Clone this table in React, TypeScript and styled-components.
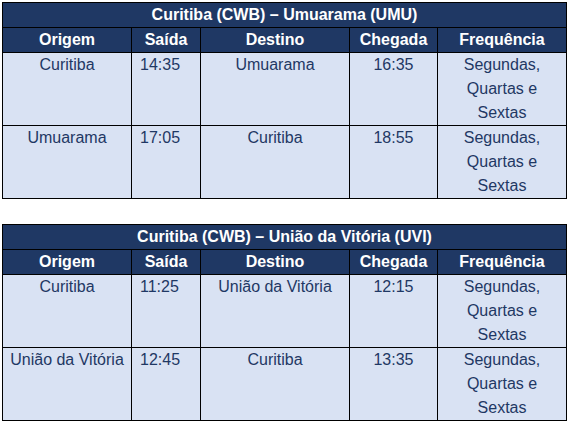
import React from 'react';
import styled, { createGlobalStyle } from 'styled-components';

const GlobalStyle = createGlobalStyle`
  body {
    margin: 0;
    padding: 2px;
    background: #ffffff;
    font-family: "Liberation Sans", Arial, sans-serif;
  }
`;

const Page = styled.div`
  display: flex;
  flex-direction: column;
  gap: 25px;
`;

const Table = styled.table`
  width: 564px;
  table-layout: fixed;
  border-collapse: collapse;
  border: 1px solid #000;
  font-size: 16px;
  line-height: 24px;
`;

const TitleCell = styled.th`
  background: #1f3864;
  color: #ffffff;
  font-weight: bold;
  text-align: center;
  padding: 0;
  border: 1px solid #000;
`;

const HeadCell = styled.th`
  background: #1f3864;
  color: #ffffff;
  font-weight: bold;
  text-align: center;
  padding: 0 5px;
  border: 1px solid #000;
`;

const Cell = styled.td<{ $align?: 'left' | 'center' }>`
  background: #d9e2f3;
  color: #1f3864;
  text-align: ${(p) => p.$align || 'center'};
  vertical-align: top;
  padding: 0 5px 0 ${(p) => (p.$align === 'left' ? '8px' : '5px')};
  border: 1px solid #000;
`;

type Flight = {
  origem: string;
  saida: string;
  destino: string;
  chegada: string;
  frequencia: string;
};

const routes: { title: string; flights: Flight[] }[] = [
  {
    title: 'Curitiba (CWB) – Umuarama (UMU)',
    flights: [
      { origem: 'Curitiba', saida: '14:35', destino: 'Umuarama', chegada: '16:35', frequencia: 'Segundas, Quartas e Sextas' },
      { origem: 'Umuarama', saida: '17:05', destino: 'Curitiba', chegada: '18:55', frequencia: 'Segundas, Quartas e Sextas' },
    ],
  },
  {
    title: 'Curitiba (CWB) – União da Vitória (UVI)',
    flights: [
      { origem: 'Curitiba', saida: '11:25', destino: 'União da Vitória', chegada: '12:15', frequencia: 'Segundas, Quartas e Sextas' },
      { origem: 'União da Vitória', saida: '12:45', destino: 'Curitiba', chegada: '13:35', frequencia: 'Segundas, Quartas e Sextas' },
    ],
  },
];

const RouteTable: React.FC<{ title: string; flights: Flight[] }> = ({ title, flights }) => (
  <Table>
    <colgroup>
      <col style={{ width: 129 }} />
      <col style={{ width: 69 }} />
      <col style={{ width: 149 }} />
      <col style={{ width: 88 }} />
      <col style={{ width: 129 }} />
    </colgroup>
    <thead>
      <tr>
        <TitleCell colSpan={5}>{title}</TitleCell>
      </tr>
      <tr>
        <HeadCell>Origem</HeadCell>
        <HeadCell>Saída</HeadCell>
        <HeadCell>Destino</HeadCell>
        <HeadCell>Chegada</HeadCell>
        <HeadCell>Frequência</HeadCell>
      </tr>
    </thead>
    <tbody>
      {flights.map((f) => (
        <tr key={f.origem + f.saida}>
          <Cell>{f.origem}</Cell>
          <Cell $align="left">{f.saida}</Cell>
          <Cell>{f.destino}</Cell>
          <Cell>{f.chegada}</Cell>
          <Cell>{f.frequencia}</Cell>
        </tr>
      ))}
    </tbody>
  </Table>
);

export default function App() {
  return (
    <>
      <GlobalStyle />
      <Page>
        {routes.map((r) => (
          <RouteTable key={r.title} title={r.title} flights={r.flights} />
        ))}
      </Page>
    </>
  );
}
